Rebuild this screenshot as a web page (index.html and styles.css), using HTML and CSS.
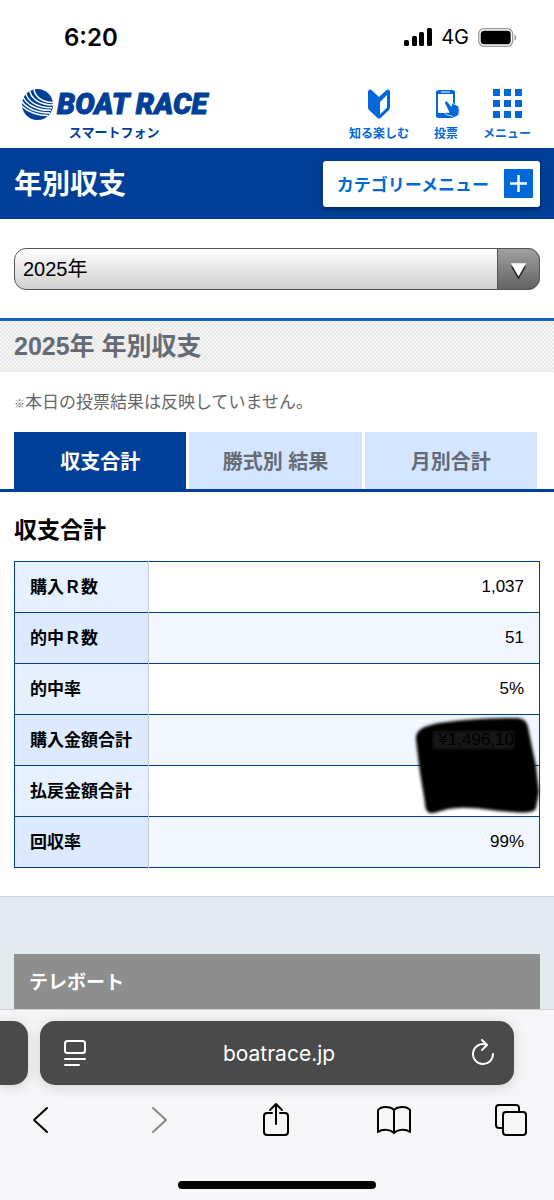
FILE: index.html
```
<!DOCTYPE html>
<html lang="ja">
<head>
    <meta charset="utf-8">
    <meta name="viewport" content="width=device-width, initial-scale=1">
    <title>年別収支</title>
    <link rel="stylesheet" href="styles.css">
</head>
<body>
    <!-- ステータスバー -->
    <div class="status">
        <span class="clock">6:20</span>
        <div class="status-right">
            <svg width="28" height="18" viewBox="0 0 28 18">
                <rect x="0" y="12" width="5" height="6" rx="1.5"/>
                <rect x="8" y="8" width="5" height="10" rx="1.5"/>
                <rect x="15" y="4" width="5" height="14" rx="1.5"/>
                <rect x="23" y="0" width="5" height="18" rx="1.5"/>
            </svg>
            <span class="network">4G</span>
            <svg width="39" height="19" viewBox="0 0 39 19">
                <rect x="0.7" y="0.7" width="34" height="17.6" rx="5.5" fill="none" stroke="#999" stroke-width="1.3"/>
                <rect x="2.7" y="2.7" width="30" height="13.6" rx="3.5"/>
                <path d="M36.5 6.5c2.4 1 2.4 5 0 6z" fill="#999"/>
            </svg>
        </div>
    </div>

    <header class="header">
        <a href="#" class="logo">
            <span class="logo-main">
                <svg width="33" height="33" viewBox="0 0 33 33">
                    <circle cx="16.5" cy="16.5" r="15.5" fill="#003f98"/>
                    <g fill="none" stroke="#fff" stroke-width="1.5">
                        <path d="M13 0C13 8 20 14 32 14.500"/>
                        <path d="M8.500 1C9 10 18 17 32 17"/>
                        <path d="M4.500 4C6 13 16 20 31 19.700"/>
                        <path d="M1.500 8C5 16 15 22.500 30 22.300"/>
                        <path d="M0 12.500C5 19.500 15 25 29 25"/>
                        <path d="M0 17.500C6 23 15 27.500 27 27.500"/>
                    </g>
                </svg>
                <span class="logo-text">BOAT RACE</span>
            </span>
            <span class="logo-sub">スマートフォン</span>
        </a>
        <nav class="nav">
            <a href="#">
                <svg width="30" height="32" viewBox="0 0 30 32">
                    <path d="M4 4.500C4 1.500 6 .8 8 2.400L15 9l7-6.600C24 .8 26 1.500 26 4.500V19c0 1.500-.5 2.500-1.500 3.500l-8 7.500c-1 .8-2 .8-3 0l-8-7.500C4.500 21.500 4 20.500 4 19z"/>
                    <path d="M16 14l7-7v12.500l-7 7z" fill="#fff"/>
                </svg>
                <span>知る楽しむ</span>
            </a>
            <a href="#">
                <svg width="30" height="32" viewBox="0 0 30 32">
                    <rect x="5" y="2" width="19" height="28" rx="2.500"/>
                    <rect x="7" y="6" width="15" height="19" fill="#fff"/>
                    <path d="M10 4h9" stroke="#fff" stroke-width="1"/>
                    <path d="M14 13.500c1-1 2-.6 2.700.4l3.600 4.400.5-2.600c.4-1.200 1.800-1 2 .2l.4 1c.8-.8 2-.4 2.300.7.8-.5 2-.1 2.200.9l.6 4.100c.2 1.500-.2 2.200-.6 3.200l.5 1-5.600 3-1.100-1.500-6.400-1.800c-1.500-.7-.8-2.300.6-2.200l2.400.1-4-8.500c-.4-.8-.6-1.700-.1-2.400z" stroke="#fff" stroke-width=".8"/>
                </svg>
                <span>投票</span>
            </a>
            <a href="#">
                <svg width="30" height="32" viewBox="0 0 30 32">
                    <path d="M1 1h7v7H1zM12 1h7v7h-7zM23 1h7v7h-7zM1 12h7v7H1zM12 12h7v7h-7zM23 12h7v7h-7zM1 23h7v7H1zM12 23h7v7h-7zM23 23h7v7h-7z"/>
                </svg>
                <span>メニュー</span>
            </a>
        </nav>
    </header>

    <div class="title-bar">
        <h1>年別収支</h1>
        <button type="button" class="category">
            <span>カテゴリーメニュー</span>
            <svg width="29" height="29" viewBox="0 0 29 29">
                <rect width="29" height="29" rx="1" fill="#0068d9"/>
                <path d="M14.500 6v17M6 14.500h17" stroke="#fff" stroke-width="2.500"/>
            </svg>
        </button>
    </div>

    <main>
        <div class="year">
            <select aria-label="年">
                <option>2025年</option>
            </select>
            <svg class="year-arrow" viewBox="0 0 42 42">
                <path d="M13 18h16l-8 14z" fill="#222"/>
                <path d="M13 15h16l-8 14z" fill="#fff"/>
            </svg>
        </div>

        <h2 class="band">2025年 年別収支</h2>
        <p class="note"><span class="note-mark">※</span>本日の投票結果は反映していません。</p>

        <div class="tabs">
            <a href="#" class="active">収支合計</a>
            <a href="#">勝式別 結果</a>
            <a href="#">月別合計</a>
        </div>

        <section class="result">
            <h3>収支合計</h3>
            <table>
                <tr><th scope="row">購入Ｒ数</th><td>1,037</td></tr>
                <tr><th scope="row">的中Ｒ数</th><td>51</td></tr>
                <tr><th scope="row">的中率</th><td>5%</td></tr>
                <tr>
                    <th scope="row">購入金額合計</th>
                    <td class="hidden-price">
                        <!-- 塗りつぶし -->
                        <svg class="scribble" width="130" height="106" viewBox="0 0 130 106">
                            <defs>
                                <filter id="soft"><feGaussianBlur stdDeviation="1.8"/></filter>
                            </defs>
                            <path filter="url(#soft)" d="M5 25C4 14 14 11 28 8C55 4 82 3 104 3C116 3 117 9 119 22L125 51L128 77L125 93C124 98 112 98 102 97C80 96 65 92 48 93C35 93 29 97 22 98C16 99 14 94 14 88L9 58Z"/>
                            <path filter="url(#soft)" d="M22 16H103V34H22Z" fill="#141414"/>
                        </svg>
                        <span>¥1,496,10</span>
                    </td>
                </tr>
                <tr><th scope="row">払戻金額合計</th><td></td></tr>
                <tr><th scope="row">回収率</th><td>99%</td></tr>
            </table>
        </section>

        <section class="teleboat">
            <h2>テレボート</h2>
        </section>
    </main>

    <!-- ブラウザの下部バー -->
    <footer class="browser">
        <div class="address-row">
            <div class="prev-tab"></div>
            <div class="address">
                <button type="button" aria-label="ページメニュー">
                    <svg width="24" height="28" viewBox="0 0 24 28">
                        <rect x="2" y="2" width="20" height="12" rx="2.500"/>
                        <path d="M2 20h20M2 26h14"/>
                    </svg>
                </button>
                <span>boatrace.jp</span>
                <button type="button" aria-label="再読み込み">
                    <svg width="24" height="28" viewBox="0 0 24 28">
                        <path d="M15 5.500A10 10 0 1 0 22 15M11 1l5 5-5 5"/>
                    </svg>
                </button>
            </div>
        </div>
        <div class="toolbar">
            <button type="button" aria-label="戻る">
                <svg width="34" height="36" viewBox="0 0 34 36"><path d="M23 6L10 18l13 12"/></svg>
            </button>
            <button type="button" aria-label="進む" disabled>
                <svg width="34" height="36" viewBox="0 0 34 36"><path d="M11 6l13 12-13 12"/></svg>
            </button>
            <button type="button" aria-label="共有">
                <svg width="34" height="36" viewBox="0 0 34 36">
                    <path d="M13 11H8q-3 0-3 3v16q0 3 3 3h18q3 0 3-3V14q0-3-3-3h-5M17 22V2M11 8l6-6 6 6"/>
                </svg>
            </button>
            <button type="button" aria-label="ブックマーク">
                <svg width="34" height="36" viewBox="0 0 34 36">
                    <path d="M17 8C13 4 4 4 1 8v22c4-3 12-3 16 1 4-4 12-4 16-1V8c-3-4-12-4-16 0zM17 8v22"/>
                </svg>
            </button>
            <button type="button" aria-label="タブ一覧">
                <svg width="34" height="36" viewBox="0 0 34 36">
                    <path d="M9 26H5q-3 0-3-3V6q0-3 3-3h17q3 0 3 3v4"/>
                    <rect x="9" y="10" width="23" height="23" rx="3"/>
                </svg>
            </button>
        </div>
        <div class="home-bar"></div>
    </footer>
</body>
</html>
```
FILE: styles.css
```
* {
    box-sizing: border-box;
}
body {
    margin: 0;
    font-family: "Liberation Sans", "Noto Sans CJK JP", sans-serif;
    color: #000;
    background-color: #fff;
}
h1, h2, h3, p {
    margin: 0;
}
a {
    text-decoration: none;
}
svg {
    display: block;
}
button {
    padding: 0;
    border: none;
    background: none;
    font-family: inherit;
    cursor: pointer;
}

/* status bar */
.status {
    display: flex;
    justify-content: space-between;
    align-items: center;
    height: 74px;
    padding: 0 37px 0 64px;
    font-family: Inter, sans-serif;
}
.clock {
    font-size: 24px;
    font-weight: 600;
}
.status-right {
    display: flex;
    align-items: center;
    gap: 9px;
}
.network {
    font-size: 20px;
}

/* header */
.header {
    display: flex;
    justify-content: space-between;
    height: 74px;
    padding: 13px 23px 0 21px;
}
.logo {
    display: flex;
    flex-direction: column;
    align-items: center;
    color: #003f98;
}
.logo-main {
    display: flex;
    align-items: center;
    gap: 3px;
    height: 34px;
}
.logo-text {
    font-family: Roboto, "Liberation Sans", sans-serif;
    font-size: 29px;
    font-weight: 900;
    font-style: italic;
    line-height: 34px;
    white-space: nowrap;
    -webkit-text-stroke: 1px #003f98;
}
.logo-sub {
    font-size: 13px;
    font-weight: bold;
    line-height: 24px;
}
.nav {
    display: flex;
    gap: 22px;
}
.nav a {
    display: flex;
    flex-direction: column;
    align-items: center;
    gap: 4px;
    padding-top: 1px;
    color: #0068d9;
    font-size: 12px;
    font-weight: bold;
    line-height: 20px;
}
.nav svg {
    fill: #0068d9;
}

/* page title */
.title-bar {
    display: flex;
    justify-content: space-between;
    align-items: center;
    height: 71px;
    padding: 0 14px;
    background-color: #003f98;
}
.title-bar h1 {
    padding-bottom: 4px;
    color: #fff;
    font-size: 28px;
    font-weight: bold;
}
.category {
    display: flex;
    align-items: center;
    gap: 15px;
    height: 46px;
    padding: 0 7px 0 14px;
    border-radius: 3px;
    background-color: #fff;
    box-shadow: 0 2px 5px rgba(0, 0, 0, 0.4);
    color: #0068d9;
    font-size: 17px;
    font-weight: bold;
}

/* year select */
.year {
    position: relative;
    margin: 29px 14px 28px;
}
.year select {
    display: block;
    appearance: none;
    width: 100%;
    height: 42px;
    padding: 0 50px 0 8px;
    border: 1px solid #555;
    border-radius: 12px;
    background: linear-gradient(#fdfdfd, #cfcfcf);
    color: #000;
    font-family: inherit;
    font-size: 20px;
}
.year-arrow {
    position: absolute;
    top: 0;
    right: 0;
    width: 43px;
    height: 42px;
    border: 1px solid #555;
    border-radius: 0 12px 12px 0;
    background: linear-gradient(#a0a0a0, #636363);
    pointer-events: none;
}

.band {
    padding: 0 14px;
    border-top: 3px solid #1a62c4;
    background: repeating-conic-gradient(#e8e8e8 0 25%, #f5f5f5 0 50%) 0 0 / 4px 4px;
    color: #646b75;
    font-size: 25px;
    font-weight: bold;
    line-height: 51px;
}
.note {
    padding: 18px 14px 15px;
    color: #666;
    font-size: 17px;
    line-height: 26px;
}
.note-mark {
    font-size: 11px;
}

/* tabs */
.tabs {
    display: grid;
    grid-template-columns: repeat(3, 1fr);
    gap: 3px;
    padding: 0 17px 0 14px;
    border-bottom: 3px solid #003f98;
}
.tabs a {
    padding-top: 3px;
    background-color: #d3e5ff;
    color: #646b75;
    font-size: 20px;
    font-weight: bold;
    line-height: 54px;
    text-align: center;
}
.tabs .active {
    background-color: #003f98;
    color: #fff;
}

/* result table */
.result {
    padding: 22px 14px 28px;
    border-bottom: 1px solid #ccd3d7;
}
.result h3 {
    margin-bottom: 15px;
    font-size: 23px;
    font-weight: bold;
    line-height: 32px;
}
.result table {
    width: 100%;
    border: 1px solid #003f8c;
    border-spacing: 0;
    border-collapse: collapse;
}
.result tr {
    height: 51px;
    border-bottom: 1px solid #003f8c;
}
.result th {
    width: 134px;
    padding: 0 0 4px 15px;
    border-right: 1px solid #c3ccd6;
    background-color: #e6f0ff;
    font-size: 17px;
    font-weight: bold;
    text-align: left;
    white-space: nowrap;
}
.result td {
    padding: 0 15px 0 0;
    font-size: 17px;
    text-align: right;
}
.result tr:nth-child(even) th {
    background-color: #dce9ff;
}
.result tr:nth-child(even) td {
    background-color: #f2f7ff;
}
.result .hidden-price {
    position: relative;
    padding-right: 25px;
}
.hidden-price span {
    position: relative;
}
.scribble {
    position: absolute;
    top: 0;
    right: -2px;
}

.teleboat {
    padding: 57px 14px 0;
    background-color: #e4ebef;
}
.teleboat h2 {
    padding: 3px 15px 0;
    background-color: #8e8e8e;
    color: #fff;
    font-size: 19px;
    font-weight: bold;
    line-height: 52px;
}

/* browser bar */
.browser {
    padding: 11px 0;
    border-top: 1px solid #d0d0d2;
    background-color: #f6f6f8;
}
.address-row {
    display: flex;
    gap: 12px;
    padding-right: 40px;
}
.prev-tab {
    width: 28px;
    border-radius: 0 15px 15px 0;
    background-color: #4a4a4a;
    box-shadow: 0 2px 14px rgba(0, 0, 0, 0.15);
}
.address {
    display: flex;
    flex: 1;
    justify-content: space-between;
    align-items: center;
    height: 64px;
    padding: 0 19px 0 23px;
    border-radius: 15px;
    background-color: #4a4a4a;
    box-shadow: 0 2px 14px rgba(0, 0, 0, 0.15);
    color: #fff;
    font-family: Inter, sans-serif;
    font-size: 21px;
}
.browser svg {
    fill: none;
    stroke: #000;
    stroke-width: 2;
    stroke-linecap: round;
    stroke-linejoin: round;
}
.address svg {
    stroke: #fff;
}
.toolbar {
    display: flex;
    justify-content: space-between;
    padding: 17px 26px 0 24px;
}
.toolbar button:disabled svg {
    stroke: #888;
}
.home-bar {
    width: 198px;
    height: 8px;
    margin: 43px auto 0;
    border-radius: 4px;
    background-color: #000;
}
```
